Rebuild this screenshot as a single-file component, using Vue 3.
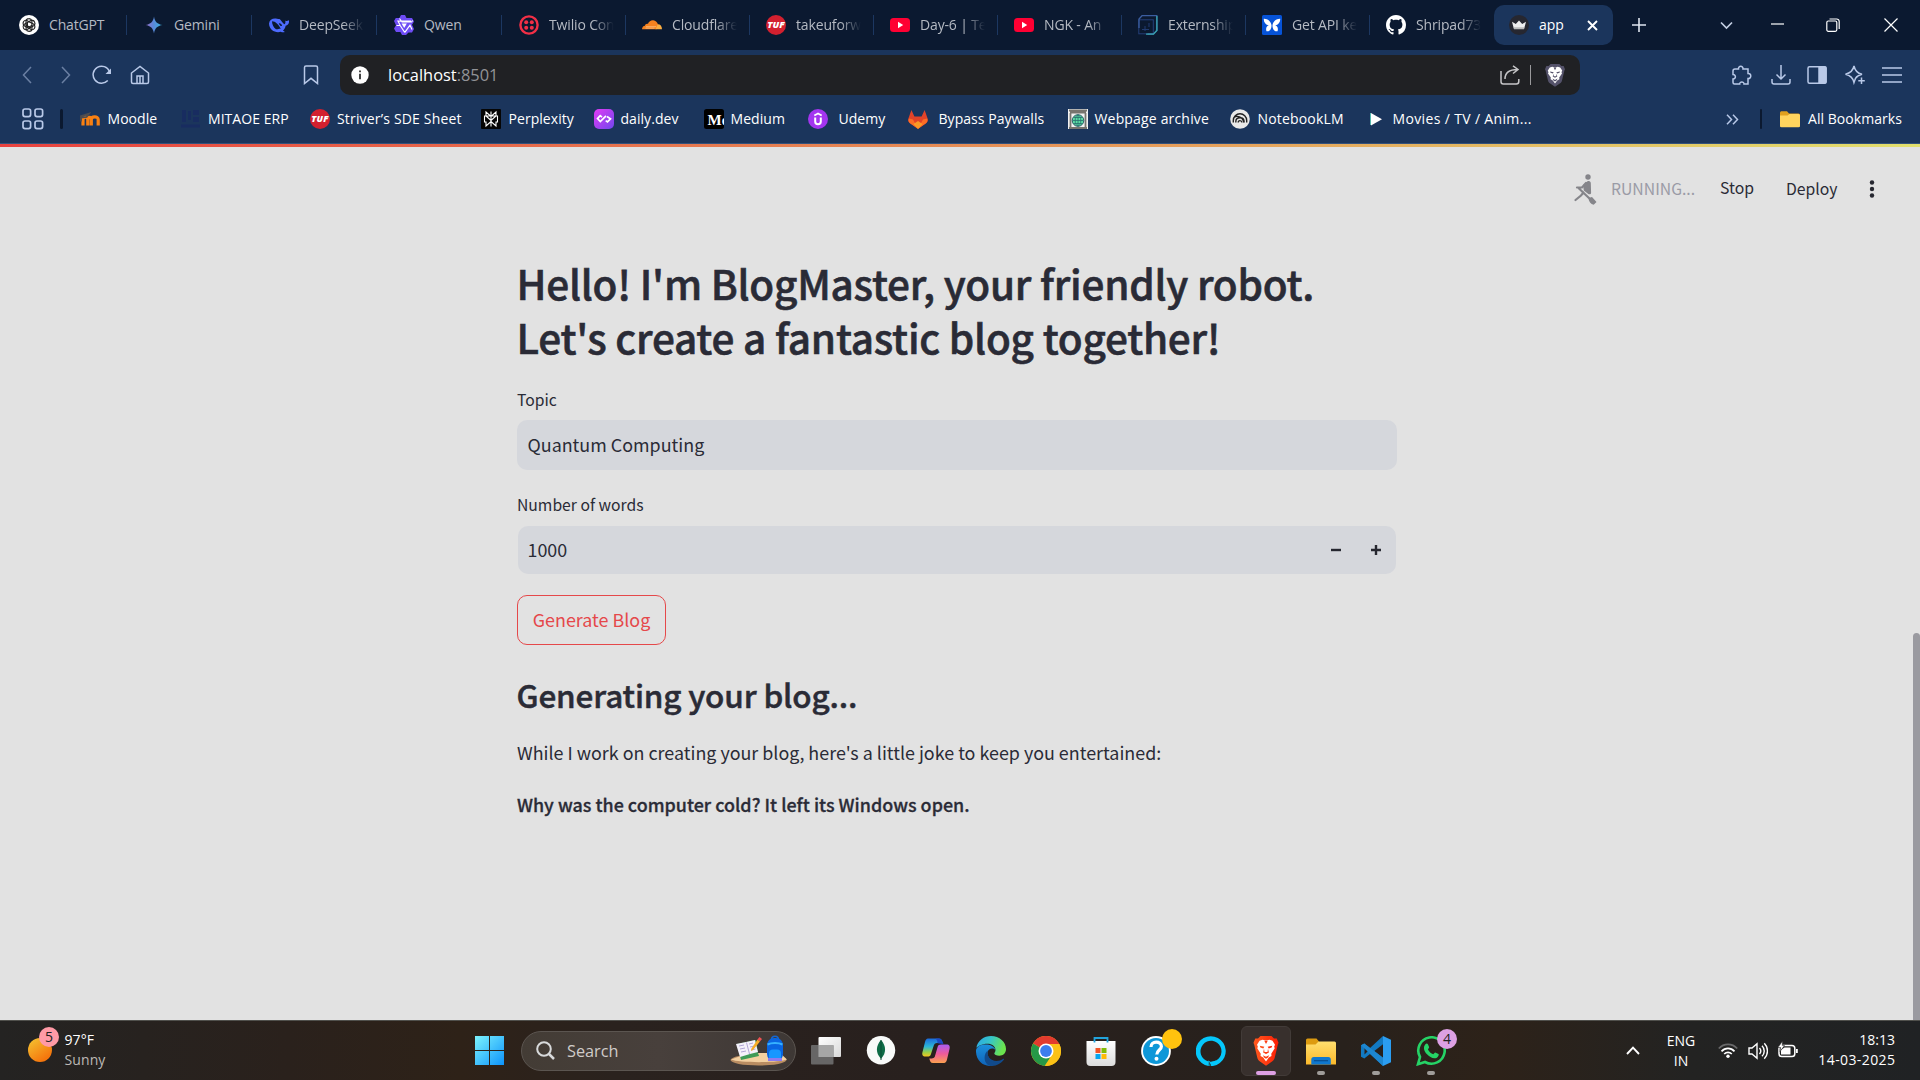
<script setup>
const tuf = '<circle cx="10" cy="10" r="10" fill="#d3202f"/><text x="10" y="12.800" font-family="Open Sans, sans-serif" font-size="8" font-weight="800" font-style="italic" fill="#fff" text-anchor="middle" textLength="17.500" lengthAdjust="spacingAndGlyphs">TUF</text>'
const yt = '<rect x="0" y="3" width="20" height="14" rx="3.5" fill="#ff0033"/><path d="M8 6.8v6.4l5.2-3.2z" fill="#fff"/>'
const lion = '<path d="M10 0 5.6 0 3.6 2 1.4 2 0 5.2.6 6.6 3 16.4c.3 1.300 1 2.300 2.200 3.100L10 22.800l4.800-3.300c1.200-.8 1.900-1.800 2.200-3.100L19.400 6.600 20 5.200 18.600 2 16.400 2 14.400 0z" fill="BG"/><path d="M10 3.400 7.200 2.800 4.800 3.600 2.800 6.600 3.500 8.200 3 9.400 5.800 13.500 5.600 15.200 7.800 16.500 10 19.400 12.200 16.500 14.400 15.200 14.200 13.500 17 9.400 16.500 8.200 17.200 6.600 15.200 3.600 12.800 2.800z" fill="#fff"/><path d="M5 7.400 8.700 8.300 7.800 9.600 5.500 8.800zM15 7.400 11.300 8.300 12.200 9.600 14.500 8.800zM8.400 9.800 7.700 12.600 10 13.800 12.300 12.600 11.600 9.800 11.200 12.300 8.800 12.300zM7.500 14.600 10 15.900 12.500 14.600 11.600 16.400 10 17.400 8.400 16.400zM8.600 3.600h2.800L10 6.200z" fill="BG"/>'

const icons = {
  chatgpt: '<circle cx="10" cy="10" r="10" fill="#fff"/><g fill="none" stroke="#222" stroke-width="1.150" stroke-linejoin="round"><path d="M10 3.600a3 3 0 0 1 2.900 2.200v4.600L10 12.100M10 3.600a3 3 0 0 0-3 3v3.500l3 1.700"/><path d="M15.500 6.800a3 3 0 0 1-.4 3.600l-4 2.300L8 11M15.500 6.800a3 3 0 0 0-4.100-1.100L8.400 7.400v3.500"/><path d="M15.500 13.200a3 3 0 0 1-3.300 1.400l-4-2.300V8.900M15.500 13.200a3 3 0 0 0-1.100-4.100L11.300 7.300"/><path d="M10 16.400a3 3 0 0 1-2.900-2.200V9.600M10 16.400a3 3 0 0 0 3-3V9.900"/><path d="M4.500 13.200a3 3 0 0 1 .4-3.600l4-2.300M4.500 13.200a3 3 0 0 0 4.100 1.100l3-1.700"/><path d="M4.500 6.800a3 3 0 0 1 3.300-1.400l4 2.300M4.500 6.800a3 3 0 0 0 1.100 4.100l3.100 1.800"/></g>',
  gemini: '<defs><linearGradient id="gm" x1="0" x2="1"><stop stop-color="#9b72cb"/><stop offset=".45" stop-color="#5b86d8"/><stop offset="1" stop-color="#36b5dd"/></linearGradient></defs><path d="M10 1.500C10.600 6.500 13.500 9.400 18.500 10 13.500 10.600 10.600 13.500 10 18.500 9.400 13.500 6.500 10.600 1.500 10 6.500 9.400 9.400 6.500 10 1.500z" fill="url(#gm)"/>',
  deepseek: '<path d="M0 8.500C.5 4.500 4 3 8 3.800c1.800.4 2.800-.3 3.600 1.300 1 1.600 2.400 2.800 3.600 4.200 1.200-.5 1.500-2.300 1-3.900 1 .8 2.200.7 3.800-.2.400 3.200-.9 5-3.400 5.600-.2 2.200-1.400 3.800-2.700 4.800l2 1.300c-1.500.7-3 .4-4.100-.2C7 18.300.2 15.500 0 8.500z" fill="#4d6bfe"/><path d="M3 6.300c3.500 0 6.500 3.200 8.800 7.500-2-.4-3 1-4.800.4C4.500 12.500 3 9.500 3 6.300z" fill="#0b1930"/><path d="M9.800 8.300c1.700-.2 3 .8 3.200 2.700-1.200.5-2.500-.6-3.200-2.700z" fill="#0b1930"/>',
  qwen: '<path d="M7 0h4l1.500 3H18l2 3.500-2 3.300 2 4.200-2 3.500h-3.500L12 20H8l-1.600-3H2L0 13.500l2-3.300L0 6l1.800-3h3.600z" fill="#6e4cf5"/><path d="M5.500 3.500 8 7h9.500l1.200-1.500M2.500 10.500h3.700l4.600 7M18 14.500l-2-4.300-5.200 7.200M6.200 10.300 4 6.200h13" fill="none" stroke="#fff" stroke-width="1.200"/><path d="M7.600 8.600h5.200l-2.600 4.500z" fill="#fff"/>',
  twilio: '<circle cx="10" cy="10" r="8.600" fill="none" stroke="#f22f46" stroke-width="2.400"/><g fill="#f22f46"><circle cx="7.200" cy="7.200" r="2"/><circle cx="12.800" cy="7.200" r="2"/><circle cx="7.200" cy="12.800" r="2"/><circle cx="12.800" cy="12.800" r="2"/></g>',
  cloudflare: '<path d="M0 14.300c0-2 1.300-3.300 3-3.500.1-1.600 1.500-2.500 3-2 .9-2.400 3-3.800 5.200-3.600 2.500.2 4.300 2 4.800 4.500l-1.600 4.600z" fill="#f6821f"/><path d="M13.500 14.300 15.500 9.400c2.500-.3 4.500 1.800 4.500 4.900z" fill="#fbad41"/><path d="M4 11.700h10M3.500 13.100h9" stroke="#fbd3a5" stroke-width=".6"/>',
  tuf, yt,
  extern: '<rect x=".8" y="4.800" width="14.500" height="14" fill="none" stroke="#243f78" stroke-width="1"/><path d="M1 13V4l3-3.300h14.800v14.700l-3.300 3.600H9.500" fill="none" stroke="#3b5d9f" stroke-width="1.300"/><path d="M18.900 1v14.500l-3.500 3.600H8" fill="none" stroke="#35a2ac" stroke-width="1.300"/><path d="M4 14.500h7M7 11v5M11 8v4" stroke="#213b70"/>',
  api: '<rect width="20" height="20" rx="1.500" fill="#0653d8"/><path d="M9.500 10C8.800 6.500 5.500 3.500 1.800 3.800 1.500 7 3.500 9.800 6.800 10.300c-2.300.6-3.300 3.200-2.300 5.900 3 .8 5.200-2.200 5-6.200zM10.500 10c.7-3.500 4-6.500 7.700-6.200.3 3.200-1.700 6-5 6.500 2.300.6 3.300 3.200 2.300 5.900-3 .8-5.200-2.200-5-6.200z" fill="#fff"/>',
  github: '<path transform="scale(1.250)" fill="#fff" d="M8 0C3.580 0 0 3.580 0 8c0 3.540 2.290 6.530 5.470 7.590.4.070.55-.17.55-.38 0-.19-.01-.82-.01-1.490-2.010.37-2.530-.49-2.690-.94-.09-.23-.48-.94-.82-1.130-.28-.15-.68-.52-.01-.53.63-.01 1.080.58 1.230.82.72 1.210 1.870.87 2.330.66.070-.52.28-.87.51-1.070-1.780-.2-3.640-.89-3.640-3.950 0-.87.31-1.590.82-2.150-.08-.2-.36-1.020.08-2.120 0 0 .67-.21 2.200.82.64-.18 1.320-.27 2-.27s1.360.09 2 .27c1.530-1.040 2.200-.82 2.200-.82.44 1.100.16 1.920.08 2.120.51.56.82 1.270.82 2.150 0 3.070-1.870 3.750-3.650 3.950.29.25.54.73.54 1.480 0 1.070-.01 1.930-.01 2.200 0 .21.15.46.55.38A8.010 8.010 0 0 0 16 8c0-4.420-3.580-8-8-8z"/>',
  crown: '<circle cx="10" cy="10" r="10" fill="#262730"/><path d="M3 6.800 6.800 9 10 5.400 13.200 9 17 6.800 15.200 13.600H4.800z" fill="#eee"/><path d="M4.600 12.300h10.800l-.4 2H5z" fill="#bbb"/>',
  moodle: '<path d="M3 17V11c0-3 4.300-3.300 4.800-.6V17M11.300 17V11c0-3.400 6.900-3.600 6.900 0v6M7.800 11c.3-2.600 3.500-2.900 3.500 0" fill="none" stroke="#f98012" stroke-width="3.200" transform="translate(0 -.5)"/><path d="M0 7.500 9 4.600 6.600 8 1 8.600v4" fill="none" stroke="#4c4c50" stroke-width="1.800"/>',
  mitaoe: '<path d="M1 1h4v12H1zM7 2h3v9H7zM12 1h6v5h-6zM12 8h6v5h-6zM0 15.500h19v3H0z" fill="#182a62" opacity=".8"/>',
  perplexity: '<rect width="20" height="20" rx="1" fill="#050505"/><g fill="none" stroke="#fff" stroke-width="1.100"><path d="M10 2.500v15M5 3v4l5 4.500L15 7V3l-5 4.500zM3.500 7h13v6H15v4l-5-4.500L5 17v-4H3.500z"/></g>',
  daily: '<defs><linearGradient id="dd" x1="0" y1="0" x2="1" y2="1"><stop stop-color="#e23bf5"/><stop offset="1" stop-color="#7147ed"/></linearGradient></defs><rect width="20" height="20" rx="5" fill="url(#dd)"/><path d="m8 8.200-1.800-1.600L3.500 9.600 6.300 12.600 12 6.800" fill="none" stroke="#fff" stroke-width="1.700"/><path d="m13 7.500 3.500 2.400-3 3-1.800-1.300" fill="none" stroke="#fff" stroke-width="1.700"/>',
  medium: '<rect width="20" height="20" rx="2.500" fill="#000"/><svg width="20" height="20"><text x="3.500" y="15.500" font-family="Liberation Serif, serif" font-size="15" font-weight="700" fill="#fff">Me</text></svg>',
  udemy: '<circle cx="10" cy="10" r="10" fill="#a435f0"/><path d="M6.300 6.600 10 4.400l3.700 2.200" fill="none" stroke="#fff" stroke-width="1.700"/><path d="M7.200 8.500v4a2.800 2.800 0 0 0 5.600 0v-4" fill="none" stroke="#fff" stroke-width="2"/>',
  gitlab: '<path d="M3.400 1 .4 9.500c-.7 2 .1 3.600 1.600 4.700L10 20l8-5.800c1.500-1.100 2.300-2.700 1.600-4.700L16.600 1l-3 6.500H6.400z" fill="#e24329"/><path d="m1 9.500 4 1 5 9.300-8-5.600C.6 13.200.1 11.300 1 9.500zM19 9.500l-4 1-5 9.300 8-5.600c1.400-1 1.900-2.900 1-4.700z" fill="#fc6d26"/><path d="m5.500 15 4.500-3 4.500 3-4.500 5z" fill="#fca326" opacity=".9"/>',
  webpage: '<rect width="20" height="20" fill="#f2f2f2"/><path d="M1 1.500h18M2 3.500h16M2.500 4v15M17.500 4v15M1 19h18" stroke="#77746e" stroke-width="1.800"/><circle cx="10" cy="11.500" r="5.800" fill="#5cdca4" stroke="#275a63"/><path d="M4.500 11.500h11M10 6v11M5.500 8.500h9M5.500 14.500h9" stroke="#28706e" stroke-width=".8"/><ellipse cx="10" cy="11.500" rx="2.800" ry="5.500" fill="none" stroke="#28706e" stroke-width=".8"/>',
  notebook: '<circle cx="10" cy="10" r="9.800" fill="#e9e9e9"/><g fill="none" stroke="#222" stroke-width="1.400"><path d="M3.300 13.500v-2a6.700 6.700 0 0 1 13.400 0v2M5.800 13.500v-.8c0-2.500 2-3.900 4.200-3.900 2.500 0 4.200 1.800 4.200 4.700M4 8.500c3-2 8.500-1.500 9.800 5M8.200 13.500c0-2.500 3.500-2.500 3.700 0"/></g>',
  play: '<path d="M3 3.500 14.500 10 3 16.500z" fill="#31254d"/><path d="M4 4 15 10.200 4 16.500z" fill="#fff"/><path d="M3.500 4v12" stroke="#51b7ad" stroke-width="1"/>',
}

const tabs = [
  ['chatgpt', 'ChatGPT'], ['gemini', 'Gemini'], ['deepseek', 'DeepSeek', true], ['qwen', 'Qwen'],
  ['twilio', 'Twilio Con', true], ['cloudflare', 'Cloudflare', true], ['tuf', 'takeuforw', true], ['yt', 'Day-6 | Te', true],
  ['yt', 'NGK - An', true], ['extern', 'Externship', true], ['api', 'Get API ke', true], ['github', 'Shripad73', true],
]

const bookmarks = [
  { icon: 'moodle', text: 'Moodle', w: 101, gap: 8 },
  { icon: 'mitaoe', text: 'MITAOE ERP', w: 129, gap: 7.5 },
  { icon: 'tuf', text: 'Striver’s SDE Sheet', w: 171, gap: 7.5, mid: true },
  { icon: 'perplexity', text: 'Perplexity', w: 113, gap: 8 },
  { icon: 'daily', text: 'daily.dev', w: 110, gap: 7 },
  { icon: 'medium', text: 'Medium', w: 104, gap: 7 },
  { icon: 'udemy', text: 'Udemy', w: 100, gap: 11 },
  { icon: 'gitlab', text: 'Bypass Paywalls', w: 160, gap: 11 },
  { icon: 'webpage', text: 'Webpage archive', w: 162, gap: 7, mid: true },
  { icon: 'notebook', text: 'NotebookLM', w: 137, gap: 8, mid: true },
  { icon: 'play', text: 'Movies / TV / Anim...', w: 170, gap: 6, wide: true },
]

// Taskbar glyphs share a 30 x 30 box.
const apps = [
  { name: 'taskview', svg: '<defs><linearGradient id="tv" x1="0" y1="0" x2="1" y2="1"><stop stop-color="#fff"/><stop offset="1" stop-color="#d9d9d9"/></linearGradient></defs><rect x="7.500" y="1" width="22.500" height="20" rx="1" fill="url(#tv)"/><rect y="9" width="22.500" height="19.500" rx="1" fill="#6c6c6c" opacity=".92"/><path d="M7.500 9h15v12h-15z" fill="#a6a6a6"/>' },
  { name: 'mongo', svg: '<circle cx="15" cy="14.300" r="14.200" fill="#f8faf9"/><path d="M15 4c5.500 6 5.300 13 .3 18.500h-.6C9.700 17 9.500 10 15 4z" fill="#0d6b46"/><path d="M15 4v20" stroke="#0a4e34"/>' },
  { name: 'copilot', svg: '<defs><linearGradient id="c1" x1="0" y1="0" x2="0" y2="1"><stop stop-color="#1b6bdd"/><stop offset=".45" stop-color="#2cb6d6"/><stop offset=".75" stop-color="#96cf4a"/><stop offset="1" stop-color="#f8c51c"/></linearGradient><linearGradient id="c2" x1="0" y1="0" x2="0" y2="1"><stop stop-color="#a95cf4"/><stop offset=".5" stop-color="#ee5a9b"/><stop offset="1" stop-color="#fba04f"/></linearGradient></defs><path d="M7 2.500h11c2.500 0 3 2 3.700 4.500H16c-2 0-2.800 1-3.400 3L10 18c-.5 2-1.600 2.600-3.500 2.600H4.500C1.500 20.600.8 18.500 1.500 16L4 6c.5-2 1.500-3.500 3-3.500z" fill="url(#c1)"/><path d="M23 27H12c-2.500 0-3-2-3.700-4.500 4 0 5.100-.5 5.700-2.500l2.600-9c.5-2 1.600-2.600 3.500-2.600h5.400c3 0 3.700 2.100 3 4.600L26 23.500c-.5 2-1.500 3.500-3 3.500z" fill="url(#c2)"/><path d="M18 2.500c2.500 0 3.500 3 4.500 5.500l-6-.8c0-2-.5-3.500-2-4.700z" fill="#1b49c4"/>' },
  { name: 'edge', svg: '<defs><linearGradient id="e1" x1="0" y1="0" x2="1" y2=".3"><stop stop-color="#2aa6e8"/><stop offset=".5" stop-color="#36c5c8"/><stop offset="1" stop-color="#6be34e"/></linearGradient><linearGradient id="e2" x1="0" y1="0" x2="0" y2="1"><stop stop-color="#1b8fdc"/><stop offset="1" stop-color="#0f63b8"/></linearGradient></defs><path d="M.3 12C1.500 4.500 8 0 15 0c8.500 0 15 6 15 13 0 4.200-3 6.700-6.700 6.700-3 0-5-1-5-2.200 0-.8 1.200-1.300 1.200-3.500C19.500 10.500 16 7.800 11.500 7.800 6 7.800 1.500 10.500.3 12z" fill="url(#e1)"/><path d="M0 14c1-3.500 4.500-5.600 9.500-5.600 5 0 9 2 10 5.600-1.500-2.500-7.500-2.200-8 2.500C11 22 16 26 22 25.500c-1.500 2.500-5 4.400-8.500 4.400C6 29.800-.5 23.500 0 14z" fill="url(#e2)"/><path d="M11.700 14.500c-1.200 5 2.500 10.500 8.800 10.500 2.500 0 4.700-.8 6.800-2.200.8-.4 1 .2.700.7C25.500 27 21 30 16 30 8 30 6.500 19 11.700 14.500z" fill="#114a8b"/>' },
  { name: 'chrome', svg: '<circle cx="15" cy="15" r="15" fill="#fbc116"/><path d="M15 15 2 7.500A15 15 0 0 1 28 7.500L29 9z" fill="#e33b2e"/><path d="M15 15 2 7.500a15 15 0 0 0 11.500 22.400L19 22z" fill="#269847"/><path d="M15 8h13.300a15 15 0 0 1-13.800 22L21 18.500z" fill="#fbc116"/><circle cx="15" cy="15" r="7.500" fill="#fff"/><circle cx="15" cy="15" r="5.900" fill="#3b7ded"/>' },
  { name: 'store', svg: '<defs><linearGradient id="st" x2="0" y2="1"><stop stop-color="#fff"/><stop offset="1" stop-color="#dcdcdc"/></linearGradient></defs><path d="M.5 5h29v21a4 4 0 0 1-4 4h-21a4 4 0 0 1-4-4z" fill="url(#st)"/><path d="M8.500 6.500V2h13v4.500" fill="none" stroke="#22a4dc" stroke-width="1.800"/><path d="M9.500 12h5v5h-5z" fill="#f35325"/><path d="M15.500 12h5v5h-5z" fill="#81bc06"/><path d="M9.500 18h5v5h-5z" fill="#05a6f0"/><path d="M15.500 18h5v5h-5z" fill="#ffba08"/>' },
  { name: 'help', badge: ' ', color: '#ffc20e', svg: '<circle cx="15" cy="15" r="14.900" fill="#fff"/><circle cx="15" cy="15" r="13" fill="#0d97d8"/><path d="M10 11c0-3 2.200-4.800 5.200-4.800s5.200 1.600 5.200 4.200c0 3.500-4.600 3.800-4.600 8" fill="none" stroke="#fff" stroke-width="3.200"/><circle cx="15.500" cy="22.800" r="2" fill="#fff"/>' },
  { name: 'alexa', svg: '<path d="M12.500 30A15 15 0 1 1 17 30c-2 .2-2.200-.3-1.500-1.600A22 22 0 0 0 15 25.800a10.500 10.500 0 1 0-2.500-.3V30z" fill="#05c7fb"/><path d="M12.300 24.500 15 26l5-1.500-2.500 4.200-2 1.300h-3z" fill="#05c7fb"/><path d="M13 25l.6 5 1.500-.5z" fill="#28201c"/>' },
  { name: 'brave', active: true, svg: '<defs><linearGradient id="br"><stop stop-color="#ff5a1f"/><stop offset="1" stop-color="#fb1e05"/></linearGradient></defs><g transform="translate(2.500 0) scale(1.250 1.310)">' + lion.replaceAll('BG', 'url(#br)') + '</g>' },
  { name: 'explorer', run: true, svg: '<defs><linearGradient id="ex" x2="0" y2="1"><stop stop-color="#ffdf6f"/><stop offset="1" stop-color="#fbb92b"/></linearGradient></defs><path d="M0 4a1.500 1.500 0 0 1 1.500-1.500h9L13 5.500 10 9H0z" fill="#dd9b10"/><path d="M0 8.500h9.500l3-3H28.500A1.500 1.500 0 0 1 30 7v21.500H0z" fill="url(#ex)"/><path d="M5.300 28.500v-5a2.500 2.500 0 0 1 2.500-2.500h14.500a2.500 2.500 0 0 1 2.500 2.500v5z" fill="#0f78cf"/><path d="M8 24.700h14" stroke="#084e91" stroke-width="1.200"/>' },
  { name: 'vscode', run: true, svg: '<path d="M22 0 9 12 3.300 7.600 0 9.200v11.600l3.300 1.600L9 18l13 12z" fill="#1279c2"/><path d="M3.500 11.500v7L7 15z" fill="#28201c"/><path d="M22 8.300 13.300 15 22 21.700z" fill="#28201c"/><path d="m22 0 8 3.700v22.600L22 30z" fill="#2b9df1"/><path d="M3.300 7.600 22 21.800V30L0 9.200z" fill="#1d86d0"/>' },
  { name: 'whatsapp', run: true, badge: '4', color: '#dda0e4', svg: '<path d="M2 28.200 4 21a13.200 13.200 0 1 1 5 5z" fill="none" stroke="#25d366" stroke-width="2.600"/><path d="M9.200 8.500c1-1.200 2.200-1.200 2.700-.2l1.200 2.800c.2.700-.6 1.500-1.200 2.300 1.300 2.300 3 3.800 5.400 4.800.7-.5 1.300-1.900 2-1.800l3.200 1.600c.8.500-.2 3.200-2 3.900-3.200 1.200-7-.8-9.500-3.600-2.800-3-4.200-6.800-1.800-9.800z" fill="#25d366"/>' },
]
const shield = lion.replaceAll('BG', '#54526a')
</script>

<template>
  <div class="screen">
    <header class="tabstrip">
      <div v-for="t in tabs" :key="t[1]" class="tab">
        <svg class="fav" viewBox="0 0 20 20" v-html="icons[t[0]]"></svg>
        <span class="tab-title" :class="{ fade: t[2] }">{{ t[1] }}</span>
      </div>
      <div class="tab active">
        <svg class="fav" viewBox="0 0 20 20" v-html="icons.crown"></svg>
        <span class="app-title">app</span>
        <svg class="tab-close" width="11" height="11" viewBox="0 0 11 11"><path d="m1 1 9 9M10 1 1 10" stroke="#fff" stroke-width="1.900" /></svg>
      </div>
      <svg class="newtab" width="14" height="14" viewBox="0 0 14 14"><path d="M7 0v14M0 7h14" stroke="#dfe5ef" stroke-width="1.600" /></svg>
      <div class="winctl">
        <svg width="13" height="9" viewBox="0 0 13 9"><path d="m1 1.500 5.500 5.500L12 1.500" fill="none" stroke="#c3cee2" stroke-width="1.700" /></svg>
        <svg width="13" height="14" viewBox="0 0 13 14"><path d="M0 6h13" stroke="#fff" stroke-width="1.200" /></svg>
        <svg width="14" height="14" viewBox="0 0 14 14" fill="none" stroke="#fff" stroke-width="1.200"><rect x=".8" y="3" width="10" height="10.300" rx="1.500" /><path d="M3.500 1h7.200a2.500 2.500 0 0 1 2.500 2.500V11" /></svg>
        <svg width="14" height="14" viewBox="0 0 14 14"><path d="m.5.5 13 13M13.500.5l-13 13" stroke="#fff" stroke-width="1.200" /></svg>
      </div>
    </header>

    <div class="toolbar">
      <div class="nav">
        <svg width="10" height="18" viewBox="0 0 10 18" class="dim"><path d="M9 1 1.500 9 9 17" /></svg>
        <svg width="10" height="18" viewBox="0 0 10 18" class="dim"><path d="m1 1 7.500 8L1 17" /></svg>
        <svg width="20" height="20" viewBox="0 0 20 20"><path d="M15.800 15.500A8.500 8.500 0 1 1 17.500 6.500" /><path d="M19 3.500v5.500h-5.500z" fill="#b9c9e8" stroke="none" /></svg>
        <svg width="20" height="20" viewBox="0 0 20 20"><path d="M1.500 17V8L10 1.500 18.500 8v9c0 1-.5 1.500-1.500 1.500H3c-1 0-1.500-.5-1.500-1.500zM7 18v-7h6v7M10 11v7" /></svg>
        <svg class="save" width="16" height="20" viewBox="0 0 16 20"><path d="M1.500 18.500V2.500c0-1 .5-1.500 1.500-1.500h10c1 0 1.500.5 1.500 1.500v16L8 13.300z" /></svg>
      </div>
      <div class="urlbar">
        <svg width="18" height="18" viewBox="0 0 18 18"><circle cx="9" cy="9" r="8.700" fill="#fff" /><path d="M9 7.700v5.500M9 4.500v1.700" stroke="#222" stroke-width="1.700" /></svg>
        <span class="url">localhost<i>:8501</i></span>
        <svg width="20" height="20" viewBox="0 0 20 20" fill="none" stroke="#c5c5c7" stroke-width="1.500"><path d="M1 6v10.500c0 1.500.8 2.500 2.300 2.500h13c1.500 0 2.500-.8 2.500-2.500V14M5 14c0-6 4-9.500 12.500-9.500M13 .8l5 3.700-5 4" /></svg>
        <b class="urlsep"></b>
        <svg width="20" height="23" viewBox="0 0 20 23" v-html="shield"></svg>
      </div>
      <div class="tools">
        <svg width="20" height="20" viewBox="0 0 20 20"><path d="M3 4h3.500C6 .3 11.500.3 11 4h5v4.500c3.700-.5 3.700 5.500 0 5V19h-4c.2-2.600-4.500-2.600-4.300 0H2.500C1.500 19 1 18.500 1 17.500V14c3.200.2 3.200-4.700 0-4.500V6c0-1.300.7-2 2-2z" /></svg>
        <svg width="20" height="20" viewBox="0 0 20 20"><path d="M10 0v13.500M5.500 9.500 10 14l4.500-4.500M1 14v3c0 1.300.7 2 2 2h14c1.300 0 2-.7 2-2v-3" /></svg>
        <svg width="20" height="20" viewBox="0 0 20 20"><rect x="1" y="1.800" width="18" height="16.400" rx="1.500" /><path d="M12 2h6a1 1 0 0 1 1 1v14a1 1 0 0 1-1 1h-6z" fill="#b9c9e8" /></svg>
        <svg width="22" height="20" viewBox="0 0 22 20"><path d="M10 1c1 5 3 7 8 8.300-3.500.8-5 1.700-6.500 4L10 17.500C9 13 6.500 10.500 1.500 9.300 6.500 8 9 6 10 1zM17.500 12.500v6.500M14.300 15.800h6.500" /></svg>
        <svg width="20" height="18" viewBox="0 0 20 18"><path d="M0 2h20M0 9h20M0 16h20" /></svg>
      </div>
    </div>

    <div class="bookmarks">
      <svg class="grid4" width="22" height="22" viewBox="0 0 22 22" fill="none" stroke="#b9c9e8" stroke-width="1.700"><rect x="1" y="1" width="7.600" height="7.600" rx="2" /><rect x="13" y="1" width="7.600" height="7.600" rx="2" /><rect x="1" y="13" width="7.600" height="7.600" rx="2" /><rect x="13" y="13" width="7.600" height="7.600" rx="2" /></svg>
      <b class="bsep"></b>
      <div class="blist">
        <div v-for="b in bookmarks" :key="b.text" class="bm" :class="{ wide: b.wide, mid: b.mid }" :style="{ width: b.w + 'px', gap: b.gap + 'px' }">
          <svg class="fav" viewBox="0 0 20 20" v-html="icons[b.icon]"></svg>
          <span>{{ b.text }}</span>
        </div>
      </div>
      <div class="bright">
        <svg width="13" height="11" viewBox="0 0 13 11"><path d="m1 .8 4.500 4.700L1 10.200M7 .8l4.500 4.700L7 10.200" fill="none" stroke="#b9c9e8" stroke-width="1.500" /></svg>
        <b class="bsep"></b>
        <svg width="20" height="17" viewBox="0 0 20 17"><path d="M0 2C0 .8.8.3 1.500.3H7l2 2.200h9.500A1.500 1.500 0 0 1 20 4v11.500H0z" fill="#e0a01e" /><path d="M0 4.500h7.500l2-1.500h9A1.500 1.500 0 0 1 20 4.500v10.300a1.500 1.500 0 0 1-1.500 1.500h-17A1.500 1.500 0 0 1 0 14.800z" fill="#ffd45e" /></svg>
        <span class="all">All Bookmarks</span>
      </div>
    </div>

    <main class="page">
      <div class="status">
        <svg width="23" height="31" viewBox="0 0 23 31" fill="#85858a"><circle cx="14" cy="3" r="2.700" /><path d="M9 11 13.500 7.200c2-.8 3.300.3 3.300 2l.3 9.500c0 1.500-1.500 2-2.800 1.400l-4.500-3.700z" /><path d="M12 9 8 13.500 3 13.500M5 14.500 16 25M9.500 18.500 7 21.500 1.500 26" fill="none" stroke="#85858a" stroke-width="2.200" stroke-linecap="round" /><path d="m14.500 24 3.500-1 4.500 5-2.800 2.700c-3-.5-5-3-5.200-6.700z" /></svg>
        <span class="running">RUNNING...</span>
        <span class="stop">Stop</span>
        <span class="deploy">Deploy</span>
        <svg width="6" height="18" viewBox="0 0 6 18" fill="#262730"><circle cx="3" cy="2.500" r="2.200" /><circle cx="3" cy="9" r="2.200" /><circle cx="3" cy="15.500" r="2.200" /></svg>
      </div>
      <section class="content">
        <h1>Hello! I'm BlogMaster, your friendly robot.<br />Let's create a fantastic blog together!</h1>
        <label>Topic</label>
        <div class="field">Quantum Computing</div>
        <label class="second">Number of words</label>
        <div class="field number">
          <span>1000</span>
          <svg width="10" height="10" viewBox="0 0 10 10"><path d="M0 5h10" stroke="#262730" stroke-width="2.400" /></svg>
          <svg width="10" height="10" viewBox="0 0 10 10"><path d="M0 5h10M5 0v10" stroke="#262730" stroke-width="2.400" /></svg>
        </div>
        <button>Generate Blog</button>
        <h3>Generating your blog...</h3>
        <p>While I work on creating your blog, here's a little joke to keep you entertained:</p>
        <p class="joke">Why was the computer cold? It left its Windows open.</p>
      </section>
      <div class="scrollthumb"></div>
    </main>

    <footer class="taskbar">
      <div class="weather">
        <div class="sun"><span class="badge">5</span></div>
        <div class="wtext"><span>97°F</span><span class="muted">Sunny</span></div>
      </div>
      <svg class="start" width="29" height="29" viewBox="0 0 29 29"><defs><linearGradient id="wn" gradientUnits="userSpaceOnUse" x1="0" y1="0" x2="29" y2="29"><stop stop-color="#7cf3fd" /><stop offset="1" stop-color="#0d93fb" /></linearGradient></defs><path d="M0 0h14v14H0zM15 0h14v14H15zM0 15h14v14H0zM15 15h14v14H15z" fill="url(#wn)" /></svg>
      <div class="search">
        <svg width="19" height="19" viewBox="0 0 19 19" fill="none" stroke="#d8dadb" stroke-width="2"><circle cx="8" cy="8" r="6.800" /><path d="m13 13 5 5" stroke-width="2.500" /></svg>
        <span>Search</span>
        <svg class="art" width="58" height="31" viewBox="0 0 58 31">
          <ellipse cx="28.500" cy="25" rx="28" ry="5.500" fill="#b98d62" /><path d="M1 24.500C9 21 18 19.500 25 18h25l7 6.500c-8 3.500-48 3.500-56 0z" fill="#f3d0a0" />
          <path d="m7 9 4 16 18-4-1-3L26 5z" fill="#3f9b57" /><path d="m6 9 10-2 9-2 3 12-8 2-10 3z" fill="#f4f1fa" /><path d="m16.500 7.500 3 11.500M9 11l5-1M10 14l5-1M11 17l5-1M19 9l4-1M20 12l4.500-1M21 15l4.500-1" stroke="#a99dd0" stroke-width=".9" />
          <path d="m23 15-2 1 .5-2.500 6-9 2.500 2z" fill="#f7ac26" /><path d="m27.500 4.500 2-2.500 2.500 2-2 2.500z" fill="#ee5253" />
          <path d="M41.500 5c0-5 7-5 7 0" fill="none" stroke="#1667d0" stroke-width="1.700" /><rect x="37" y="3" width="16" height="23" rx="7" fill="#0965e2" /><path d="M37.500 9.500c4-2 11-2 15 0" fill="none" stroke="#36b2ff" stroke-width="2" /><rect x="39" y="14.500" width="12" height="11" rx="4" fill="#1697ff" /><path d="M38 23h14v3H38z" fill="#8d7bf0" />
        </svg>
      </div>
      <div class="apps">
        <div v-for="a in apps" :key="a.name" class="slot">
          <div class="tile" :class="{ active: a.active }">
            <svg width="30" height="30" viewBox="0 0 30 30" v-html="a.svg"></svg>
            <span v-if="a.badge" class="badge" :style="{ background: a.color }">{{ a.badge }}</span>
            <b v-if="a.active || a.run" class="mark"></b>
          </div>
        </div>
      </div>
      <div class="tray">
        <svg width="14" height="9" viewBox="0 0 14 9"><path d="m1 8 6-6.300L13 8" fill="none" stroke="#fff" stroke-width="1.900" /></svg>
        <div class="lang"><span>ENG</span><span>IN</span></div>
        <svg width="20" height="16" viewBox="0 0 20 16" fill="none" stroke="#fff" stroke-width="1.700"><path d="M.8 5.500c5-5.600 13.400-5.600 18.400 0" stroke="#69696a" /><path d="M3.500 8.300c3.700-4 9.300-4 13 0M6.200 11c2.300-2.300 5.300-2.300 7.600 0" /><circle cx="10" cy="13.300" r="1.700" fill="#fff" stroke="none" /></svg>
        <svg width="20" height="18" viewBox="0 0 20 18" fill="none" stroke="#fff" stroke-width="1.400"><path d="M1 6h3l5-4.300v14.600L4 12H1zM11.500 6c1.500 1.700 1.500 4.300 0 6M14 3.700c3 3 3 7.600 0 10.600M16.300 1.300c4.200 4.300 4.200 11.100 0 15.400" /></svg>
        <svg class="battery" width="20" height="17" viewBox="0 0 20 17"><rect x="1" y="4.500" width="15.800" height="11" rx="2.800" fill="none" stroke="#fff" stroke-width="1.500" /><path d="M18 8h1.800v4H18zM3 9 6.500 6.500H12.500V13.500H3z" fill="#fff" /><path d="M4.500 0 0 6.500h2.500L2 10.500 6.500 4.500H4.300z" fill="#fff" stroke="#232323" stroke-width=".6" /></svg>
        <div class="clock"><span>18:13</span><span class="date">14-03-2025</span></div>
      </div>
    </footer>
  </div>
</template>

<style>
body { margin: 0; overflow: hidden; }
</style>

<style scoped>
.screen { width: 1920px; height: 1080px; display: flex; flex-direction: column; overflow: hidden; font-family: "Open Sans", "Noto Sans", sans-serif; font-size: 14px; color: #fff; white-space: nowrap; }
svg { flex: none; display: block; }
.fav { width: 20px; height: 20px; }

.tabstrip { height: 50px; background: #0b1930; display: flex; align-items: center; padding-left: 2px; box-sizing: border-box; }
.tab { width: 124px; height: 20px; flex: none; display: flex; align-items: center; gap: 10px; padding-left: 16px; box-sizing: border-box; border-right: 1px solid #1c3761; }
.tab:nth-child(-n+4) { width: 125px; }
.tab:nth-child(-n+5) { padding-left: 17px; }
.tab:nth-child(12) { border-color: transparent; }
.tab-title { color: #b5bac3; letter-spacing: -.15px; line-height: 20px; max-width: 68px; }
.fade { mask-image: linear-gradient(90deg, #000 44px, transparent 65px); }
.tab.active { width: 119px; height: 40px; background: #1b355c; border: 0; border-radius: 10px; padding-left: 15px; }
.app-title { letter-spacing: -.1px; width: 38px; line-height: 20px; margin-top: -1px; }
.newtab { margin-left: 19px; }
.winctl { margin-left: auto; padding-right: 22px; display: flex; align-items: center; }
.winctl svg:nth-child(2) { margin-left: 38px; }
.winctl svg:nth-child(3) { margin-left: 42px; }
.winctl svg:nth-child(4) { margin-left: 44px; }

.toolbar { height: 50px; background: #1b355c; display: flex; align-items: center; }
.nav { width: 340px; box-sizing: border-box; padding-left: 22px; display: flex; align-items: center; flex: none; fill: none; stroke: #b9c9e8; stroke-width: 1.5; }
.nav svg:nth-child(2) { margin-left: 29px; }
.nav svg:nth-child(3) { margin-left: 21px; }
.nav svg:nth-child(4) { margin-left: 18px; }
.nav .save { margin-left: 153px; }
.dim { opacity: .5; }
.urlbar { width: 1240px; height: 40px; border-radius: 10px; background: #202124; display: flex; align-items: center; box-sizing: border-box; padding: 0 15px 0 11px; flex: none; }
.url { margin: -2px 0 0 19px; flex: 1; font-size: 16.4px; letter-spacing: 0; }
.url i { font-style: normal; color: #929397; }
.urlsep { width: 1.5px; height: 20px; background: #9a9a9c; margin: 0 14px 0 10px; }
.tools { display: flex; align-items: center; margin-left: auto; padding-right: 18px; fill: none; stroke: #b9c9e8; stroke-width: 1.5; }
.tools svg + svg { margin-left: 16.500px; }
.tools svg:nth-child(2) { margin-left: 19px; }

.bookmarks { height: 45px; background: #1b355c; border-bottom: 2px solid #34527c; box-sizing: border-box; display: flex; align-items: center; padding: 0 18px 5px 22px; margin-bottom: -1px; }
.bsep { width: 2.500px; height: 20px; border-radius: 2px; background: #0b1930; }
.grid4 + .bsep { margin-left: 16px; margin-right: 17px; }
.blist { display: flex; }
.bm { display: flex; align-items: center; flex: none; line-height: 20px; letter-spacing: .05px; }
.bm.mid { letter-spacing: .17px; }
.bm.wide { letter-spacing: .35px; }
.bright { margin-left: auto; display: flex; align-items: center; }
.bright .bsep { margin: 0 18px 0 21px; }
.all { margin: -1px 0 0 8px; width: 94px; letter-spacing: .05px; line-height: 20px; }

.page { height: 876px; box-sizing: border-box; background: #e2e2e2; border-top: 3px solid; border-image: linear-gradient(90deg, #e8423f, #e6a45c 65%, #e2e06e) 1; position: relative; font-family: "Noto Sans CJK JP", "Noto Sans CJK SC", sans-serif; color: #2a2b36; display: flex; flex-direction: column; }
.status { height: 84px; display: flex; align-items: center; justify-content: flex-end; padding-right: 45px; font-size: 15.75px; }
.status span { line-height: 24px; margin-top: -1px; }
.status .running { margin-left: 14px; width: 85px; color: #9a9ba6; }
.status .stop { margin-left: 24px; width: 34px; margin-top: -2px; }
.status .deploy { margin-left: 32px; width: 51px; margin-right: 32px; }
.content { width: 880px; margin: 25px 0 0 517px; font-size: 17.9px; }
h1 { margin: 0 0 0 -.5px; font-size: 40.5px; line-height: 54px; font-weight: 500; letter-spacing: -.24px; -webkit-text-stroke: .6px currentColor; }
label { display: block; margin-top: 23px; font-size: 15.7px; line-height: 26px; }
label.second { margin-top: 22px; }
.field { margin-top: 7px; height: 50px; line-height: 48px; border-radius: 10px; background: #d5d7dc; padding-left: 10.500px; box-sizing: border-box; }
.number { height: 48px; line-height: 46px; margin: 8px 1px 0; padding: 0 15px 0 9.500px; display: flex; align-items: center; gap: 30px; }
.number span { flex: 1; margin-top: -2px; }
button { margin-top: 21px; display: block; width: 149px; height: 50px; padding: 0 0 2px; background: none; border: 1px solid #e5484a; border-radius: 10px; color: #e5484a; font: inherit; }
h3 { margin: 28px 0 0 -.5px; font-size: 31.500px; line-height: 42px; font-weight: 500; letter-spacing: -.15px; -webkit-text-stroke: .5px currentColor; }
p { margin: 22px 0 0; line-height: 30px; }
.joke { font-weight: 500; letter-spacing: .01px; -webkit-text-stroke: .3px currentColor; }
.scrollthumb { position: absolute; right: 0; top: 486px; width: 7px; height: 387px; border-radius: 4px 4px 0 0; background: #9a9aa0; }

.taskbar { height: 60px; box-sizing: border-box; border-top: 1px solid #50504c; background: linear-gradient(90deg, #242322 0, #2a211c 15%, #2e2218 24%, #2a221e 32%, #28201e 48%, #28211c 70%, #2d2219 78%, #232322 88%, #202224 100%); display: flex; align-items: center; position: relative; line-height: 20px; }
.weather { width: 475px; flex: none; display: flex; padding-left: 28px; box-sizing: border-box; }
.sun { width: 24px; height: 24px; margin-top: 7px; border-radius: 50%; background: linear-gradient(145deg, #f5bd2e 10%, #f4760d 80%); position: relative; }
.badge { position: absolute; width: 20px; height: 20px; border-radius: 50%; color: #222; font-size: 14px; line-height: 20px; text-align: center; background: #ff9aa6; }
.sun .badge { left: 11px; top: -11px; }
.wtext { display: flex; flex-direction: column; margin: -1px 0 0 12.500px; letter-spacing: .1px; }
.muted { color: #bdb9b5; }
.search { width: 275px; height: 40px; box-sizing: border-box; border: 1px solid #5b5550; border-radius: 20px; background: linear-gradient(90deg, #433c35, #48403c 50%, #3e3835); margin-left: 17px; display: flex; align-items: center; padding: 0 7px 0 14px; flex: none; }
.search span { margin-left: 12px; font-size: 16.3px; color: #d0ccc9; flex: 1; }
.apps { display: flex; margin-left: 2.500px; }
.slot { width: 55px; display: flex; justify-content: center; }
.tile { width: 50px; height: 50px; box-sizing: border-box; display: flex; align-items: center; justify-content: center; position: relative; border-radius: 6px; border: 1px solid transparent; }
.tile.active { background: #38302d; border-color: #423b38; }
.tile .badge { left: 30px; top: 2px; }
.mark { position: absolute; left: 20px; bottom: 0; width: 8px; height: 4px; border-radius: 2px; background: #a09d9a; }
.active .mark { left: 14px; width: 20px; background: #dda0e4; }
.tray { margin-left: auto; padding-right: 25px; display: flex; align-items: center; }
.lang, .clock { display: flex; flex-direction: column; text-align: center; }
.lang { width: 40px; margin: 0 17px 0 21px; }
.tray svg + svg { margin-left: 10px; }
.battery { margin-top: -2px; }
.clock { align-items: flex-end; margin: -1px 0 0 17px; width: 80px; }
.date { letter-spacing: .4px; margin-right: -.4px; }
</style>
